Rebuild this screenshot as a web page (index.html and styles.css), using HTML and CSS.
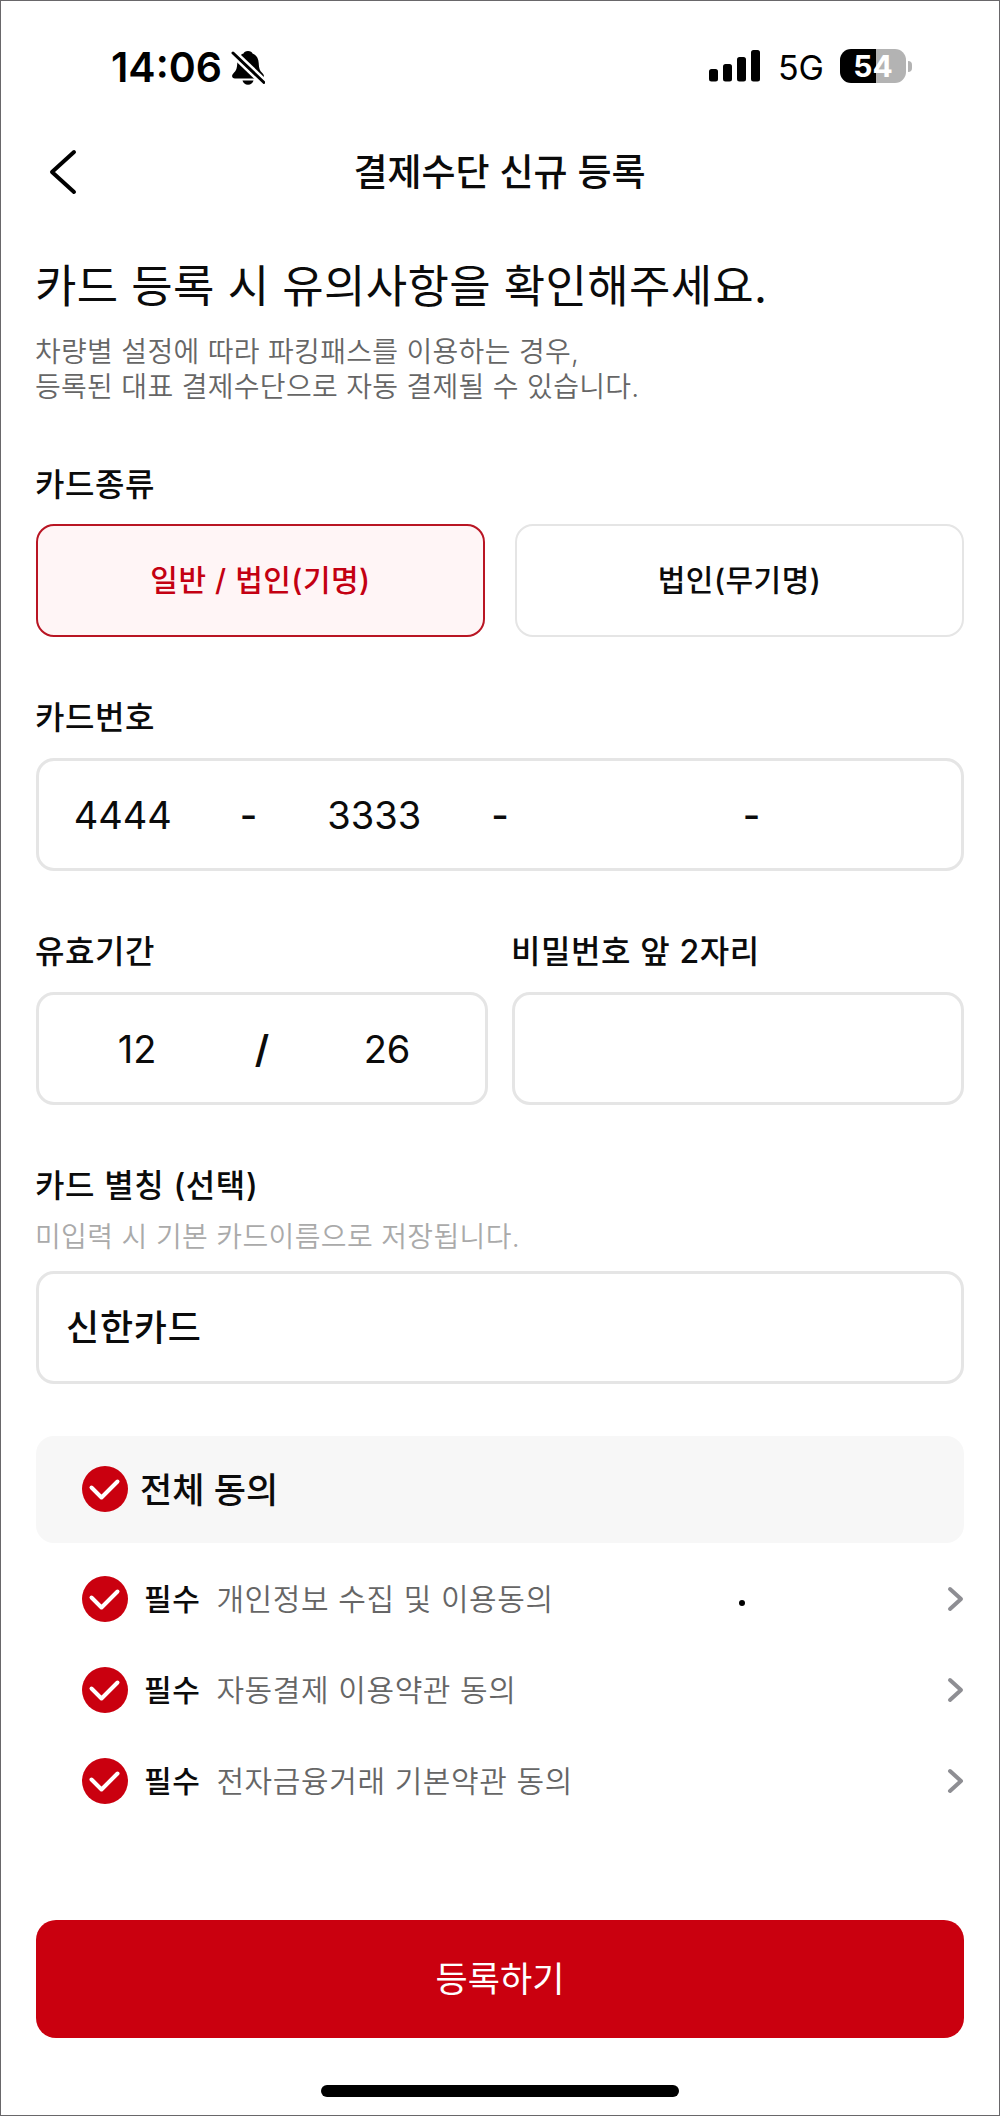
FILE: index.html
```
<!DOCTYPE html>
<html lang="ko">
<head>
  <meta charset="UTF-8">
  <title>결제수단 신규 등록</title>
  <link rel="stylesheet" href="styles.css">
</head>
<body>
  <div class="screen">

    <div class="status-bar">
      <span class="time">14:06</span>
      <svg class="bell" width="34" height="36" viewBox="0 0 34 36">
        <path d="M17 1C14.500 1 13 2 12.500 3.600C8.500 5 6.500 8.500 6.300 13C6 19 5 20.800 2.500 23.200C0 25.600 1 28.500 4 28.500H30C33 28.500 34 25.600 31.500 23.200C29 20.800 28 19 27.700 13C27.500 8.500 25.500 5 21.500 3.600C21 2 19.500 1 17 1Z"/>
        <path d="M11.500 30.500H22.500C21.800 33.200 19.800 34.700 17 34.700S12.200 33.200 11.500 30.500Z"/>
        <path class="bell-gap" d="M0 1L34 33.500"/>
        <path class="bell-slash" d="M2 3L33 32.500"/>
      </svg>
      <svg class="signal" width="52" height="32" viewBox="0 0 52 32">
        <rect x="0" y="19" width="9" height="12.500" rx="2.500"/>
        <rect x="14" y="14" width="9" height="17.500" rx="2.500"/>
        <rect x="28" y="7" width="9" height="24.500" rx="2.500"/>
        <rect x="42" y="0" width="9" height="31.500" rx="2.500"/>
      </svg>
      <span class="network">5G</span>
      <div class="battery">54</div>
      <div class="battery-cap"></div>
    </div>

    <div class="nav">
      <svg class="back" width="30" height="48" viewBox="0 0 30 48">
        <path d="M26 4L4 24l22 20"/>
      </svg>
      <h1>결제수단 신규 등록</h1>
    </div>

    <div class="content">
      <h2>카드 등록 시 유의사항을 확인해주세요.</h2>
      <p class="desc">차량별 설정에 따라 파킹패스를 이용하는 경우,<br>등록된 대표 결제수단으로 자동 결제될 수 있습니다.</p>

      <div class="label">카드종류</div>
      <div class="types">
        <div class="type active">일반 / 법인(기명)</div>
        <div class="type">법인(무기명)</div>
      </div>

      <div class="label">카드번호</div>
      <div class="box card-number">
        <span>4444</span><b>-</b><span>3333</span><b>-</b><span></span><b>-</b><span></span>
      </div>

      <div class="half">
        <div>
          <div class="label">유효기간</div>
          <div class="box expiry"><span>12</span><b>/</b><span>26</span></div>
        </div>
        <div>
          <div class="label">비밀번호 앞 2자리</div>
          <div class="box"></div>
        </div>
      </div>

      <div class="label">카드 별칭 (선택)</div>
      <p class="hint">미입력 시 기본 카드이름으로 저장됩니다.</p>
      <div class="box nickname">신한카드</div>

      <div class="agree-all">
        <svg class="check" viewBox="0 0 46 46"><circle cx="23" cy="23" r="23"/><path d="M9.500 21.500l10 10 16-16"/></svg>
        <span>전체 동의</span>
      </div>

      <div class="agree">
        <svg class="check" viewBox="0 0 46 46"><circle cx="23" cy="23" r="23"/><path d="M9.500 21.500l10 10 16-16"/></svg>
        <strong>필수</strong>
        <span>개인정보 수집 및 이용동의</span>
        <i class="dot"></i>
        <svg class="arrow" width="17" height="26" viewBox="0 0 17 26"><path d="M3 3l11 10L3 23"/></svg>
      </div>
      <div class="agree">
        <svg class="check" viewBox="0 0 46 46"><circle cx="23" cy="23" r="23"/><path d="M9.500 21.500l10 10 16-16"/></svg>
        <strong>필수</strong>
        <span>자동결제 이용약관 동의</span>
        <svg class="arrow" width="17" height="26" viewBox="0 0 17 26"><path d="M3 3l11 10L3 23"/></svg>
      </div>
      <div class="agree">
        <svg class="check" viewBox="0 0 46 46"><circle cx="23" cy="23" r="23"/><path d="M9.500 21.500l10 10 16-16"/></svg>
        <strong>필수</strong>
        <span>전자금융거래 기본약관 동의</span>
        <svg class="arrow" width="17" height="26" viewBox="0 0 17 26"><path d="M3 3l11 10L3 23"/></svg>
      </div>

      <div class="submit">등록하기</div>
    </div>

    <div class="home-bar"></div>
  </div>
</body>
</html>
```
FILE: styles.css
```
* {
  box-sizing: border-box;
  margin: 0;
  padding: 0;
}

body {
  background: #fff;
  color: #0b0b0b;
  font-family: Inter, "Noto Sans CJK KR", sans-serif;
}

.screen {
  width: 1000px;
  height: 2116px;
  border: 1px solid #69676a;
  overflow: hidden;
}

/* status bar */
.status-bar {
  height: 130px;
  padding: 0 87px 0 110px;
  display: flex;
  align-items: center;
  color: #000;
}

.time {
  padding-top: 2px;
  font-size: 41px;
  font-weight: 600;
  line-height: 50px;
}

.bell {
  margin: 4px 0 0 9px;
}

.bell-gap {
  fill: none;
  stroke: #fff;
  stroke-width: 8;
}

.bell-slash {
  fill: none;
  stroke: #000;
  stroke-width: 3;
  stroke-linecap: round;
}

.signal {
  margin-left: auto;
}

.network {
  margin-left: 17px;
  font-size: 34px;
  line-height: 40px;
  padding-top: 4px;
}

.battery {
  width: 66px;
  height: 34px;
  margin-left: 16px;
  border-radius: 11px;
  background: linear-gradient(to right, #000 54%, #b3b3b3 54%);
  color: #fff;
  font-size: 30px;
  font-weight: 700;
  line-height: 34px;
  text-align: center;
}

.battery-cap {
  width: 4px;
  height: 11px;
  margin-left: 2px;
  border-radius: 0 5px 5px 0;
  background: #b3b3b3;
}

/* title */
.nav {
  height: 82px;
  padding-left: 47px;
  display: flex;
  align-items: center;
}

.back path {
  fill: none;
  stroke: #000;
  stroke-width: 4;
  stroke-linecap: round;
  stroke-linejoin: round;
}

.nav h1 {
  flex: 1;
  padding: 1px 78px 0 0;
  text-align: center;
  font-size: 37px;
  font-weight: 500;
  line-height: 50px;
}

.content {
  padding: 44px 35px 0;
}

h2 {
  margin-left: -1px;
  font-size: 45px;
  font-weight: 400;
  letter-spacing: 0.3px;
  line-height: 60px;
}

.desc {
  margin: 18px 0 0 -1px;
  color: #666;
  font-size: 28px;
  font-weight: 350;
  letter-spacing: 0.3px;
  line-height: 35px;
}

.label {
  margin-left: -1px;
  font-size: 32px;
  font-weight: 500;
  letter-spacing: 0.6px;
  line-height: 40px;
}

.desc + .label {
  margin-top: 60px;
}

.types {
  display: grid;
  grid-template-columns: 1fr 1fr;
  gap: 30px;
  margin: 19px 0 61px;
}

.type {
  height: 113px;
  border: 2px solid #e5e5e5;
  border-radius: 18px;
  text-align: center;
  font-size: 30px;
  font-weight: 500;
  letter-spacing: 0.5px;
  line-height: 109px;
}

.type.active {
  border-color: #b91523;
  background: #fff5f6;
  color: #c40012;
}

.box {
  height: 113px;
  margin-top: 20px;
  border: 3px solid #e5e5e5;
  border-radius: 18px;
  display: flex;
  align-items: center;
  font-size: 38px;
}

.card-number span {
  width: 168px;
  text-align: center;
}

.card-number b {
  width: 84px;
  text-align: center;
  font-weight: 500;
}

.half {
  display: grid;
  grid-template-columns: 1fr 1fr;
  gap: 24px;
  margin: 61px 0;
}

.expiry {
  justify-content: center;
}

.expiry span {
  width: 194px;
  text-align: center;
}

.expiry b {
  width: 56px;
  text-align: center;
  font-weight: 600;
}

.hint {
  margin: 11px 0 0 -1px;
  color: #aaa;
  font-size: 28px;
  font-weight: 350;
  letter-spacing: 0.35px;
  line-height: 40px;
}

.nickname {
  margin-top: 14px;
  padding: 0 0 5px 27px;
  font-size: 36px;
  font-weight: 500;
  letter-spacing: 0.8px;
}

/* agreements */
.agree-all {
  height: 107px;
  margin: 52px 0 11px;
  padding: 0 0 1px 46px;
  border-radius: 18px;
  background: #f7f7f7;
  display: flex;
  align-items: center;
  font-size: 35px;
  font-weight: 500;
}

.agree-all span {
  margin-left: 12px;
  padding-bottom: 4px;
}

.agree {
  height: 91px;
  padding: 0 0 1px 46px;
  display: flex;
  align-items: center;
  font-size: 30px;
  letter-spacing: 0.6px;
}

.agree strong {
  margin: 0 16px;
  padding-bottom: 4px;
  font-weight: 500;
}

.agree span {
  padding-bottom: 4px;
  color: #666;
  font-weight: 350;
}

.check {
  width: 46px;
  height: 46px;
  fill: #ca000f;
}

.check path {
  fill: none;
  stroke: #fff;
  stroke-width: 4;
  stroke-linecap: round;
  stroke-linejoin: round;
}

.dot {
  width: 6px;
  height: 6px;
  margin: 8px 0 0 185px;
  border-radius: 50%;
  background: #000;
}

.arrow {
  margin-left: auto;
}

.arrow path {
  fill: none;
  stroke: #8e8e93;
  stroke-width: 4;
  stroke-linecap: round;
  stroke-linejoin: round;
}

.submit {
  height: 118px;
  margin-top: 93px;
  border-radius: 20px;
  background: #ca000f;
  color: #fff;
  text-align: center;
  font-size: 35px;
  line-height: 118px;
}

.home-bar {
  width: 358px;
  height: 12px;
  margin: 47px auto 0;
  border-radius: 6px;
  background: #000;
}
```
